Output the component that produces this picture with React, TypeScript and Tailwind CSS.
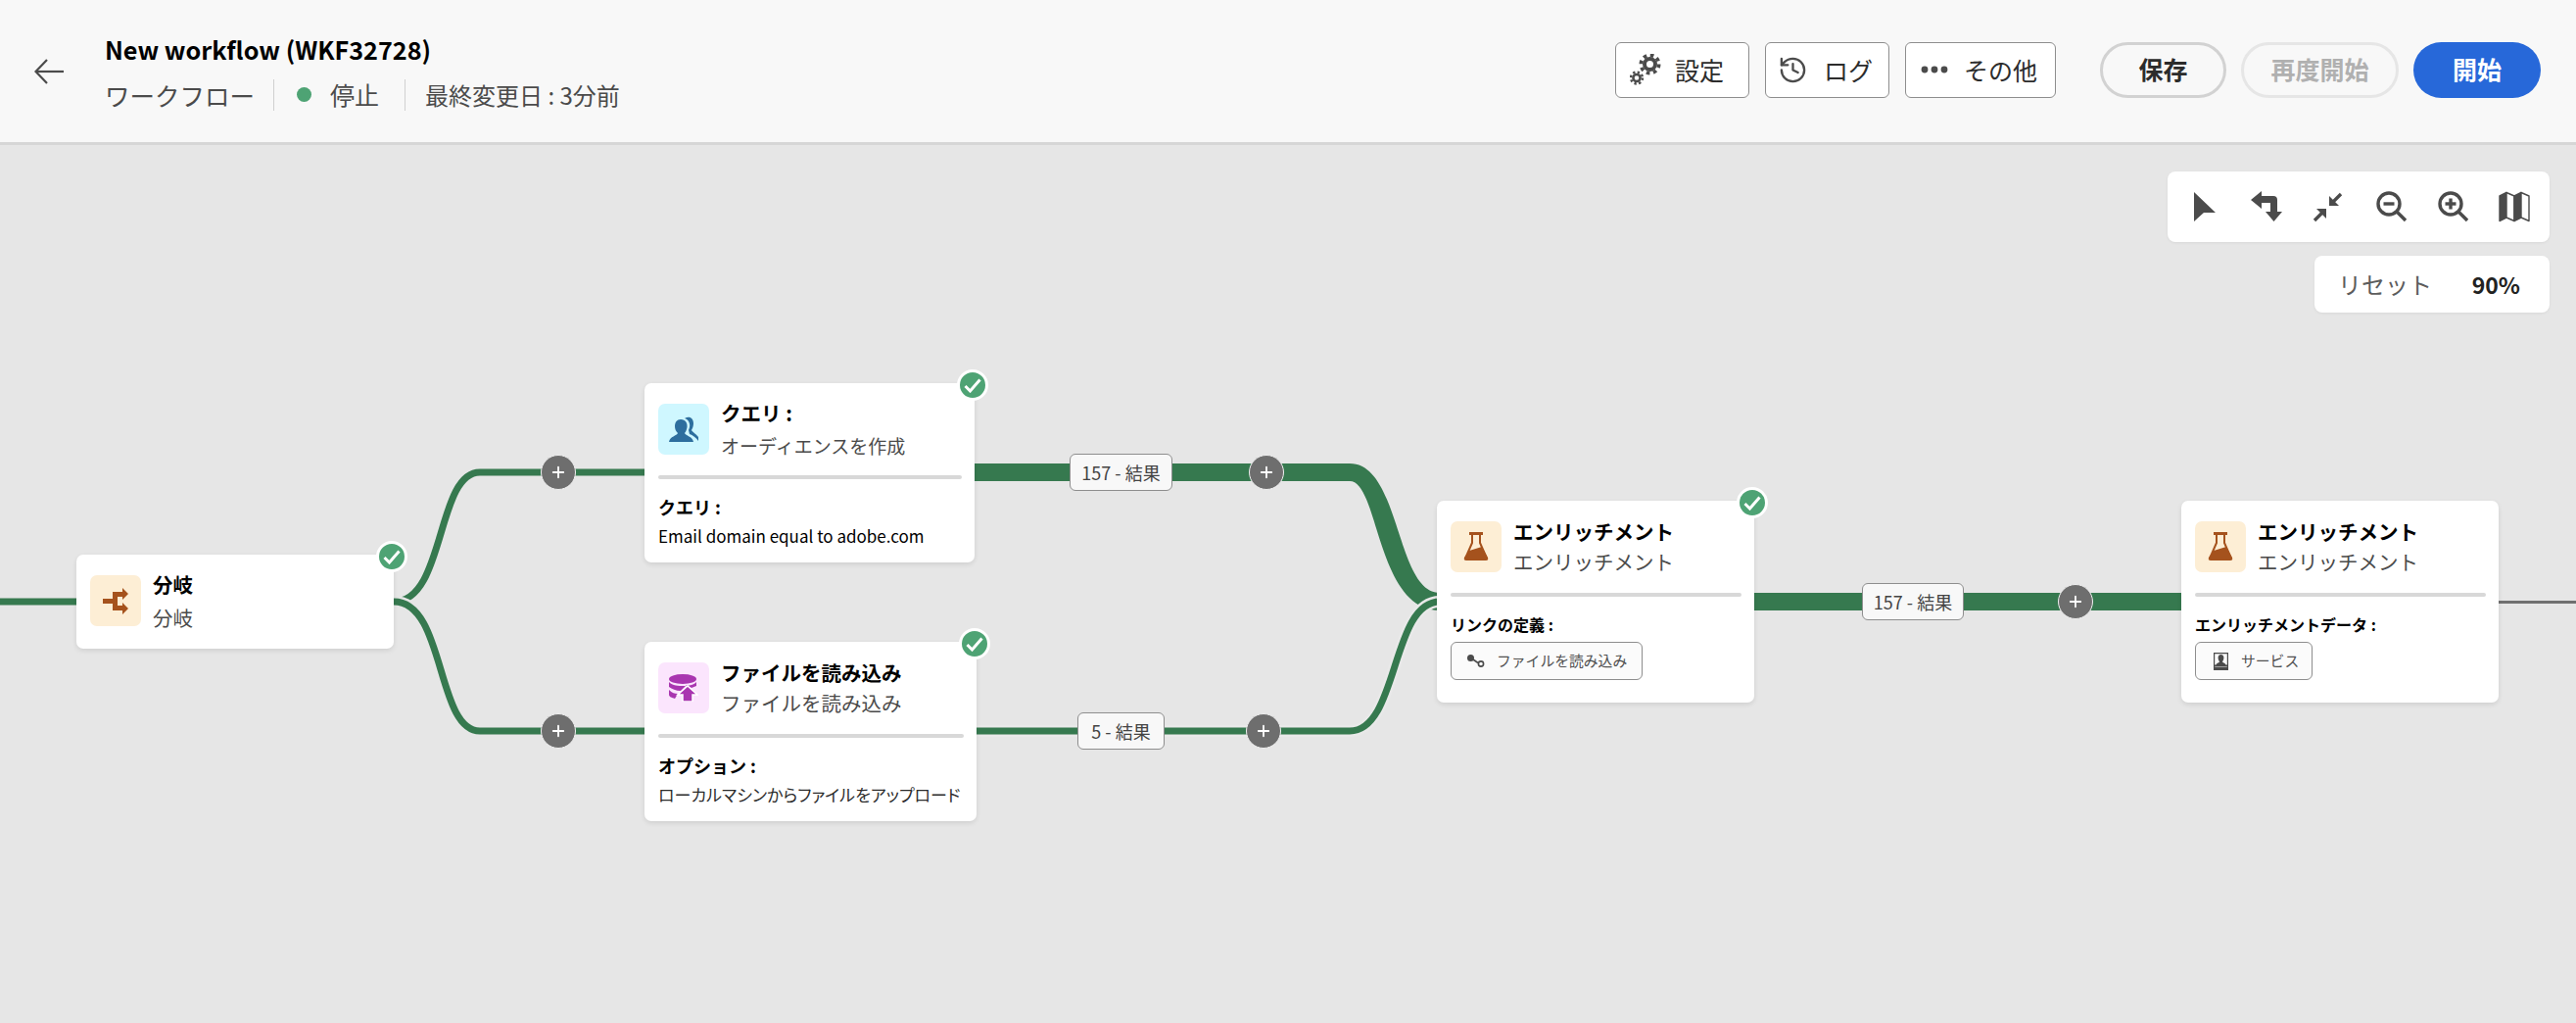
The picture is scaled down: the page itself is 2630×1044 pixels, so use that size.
import { ReactNode } from "react";
import { History, Plus } from "lucide-react";

const FONT = "font-['Noto_Sans_CJK_JP','Noto_Sans',sans-serif]";

function Gear({ cx, cy, r }: { cx: number; cy: number; r: number }) {
  const ring = r * 1.06;
  const teeth = 2 * Math.PI * ring / 16;
  return (
    <g fill="none" stroke="#4b4b4b">
      <circle cx={cx} cy={cy} r={ring} strokeWidth={r * 0.44} strokeDasharray={`${teeth} ${teeth}`} />
      <circle cx={cx} cy={cy} r={r * 0.64} strokeWidth={r * 0.46} />
    </g>
  );
}

function GearsIcon() {
  return (
    <svg width="32" height="32" viewBox="0 0 32 32">
      <Gear cx={20.5} cy={10.5} r={8.6} />
      <Gear cx={7} cy={24.5} r={5.6} />
    </svg>
  );
}

function BackArrow() {
  return (
    <svg width="30" height="26" viewBox="0 0 30 26" fill="none" stroke="#4b4b4b" strokeWidth="2.2">
      <path d="M30 13H2" />
      <path d="M13 1L1.5 13L13 25" />
    </svg>
  );
}

function ToolIcon({ children }: { children: ReactNode }) {
  return (
    <svg width="32" height="32" viewBox="0 0 32 32" fill="#4b4b4b" stroke="none">
      {children}
    </svg>
  );
}

function ZoomGlass({ plus }: { plus?: boolean }) {
  return (
    <ToolIcon>
      <g fill="none" stroke="#4b4b4b" strokeWidth="3.4">
        <circle cx="14" cy="13" r="11" />
        <path d="M22 21L31 30" />
        <path d="M8.5 13H19.5" />
        {plus && <path d="M14 7.5V18.5" />}
      </g>
    </ToolIcon>
  );
}

function Toolbar() {
  return (
    <div className="absolute right-[27px] top-[27px] flex flex-col items-end gap-[14px]">
      <div className="flex h-[72px] w-[390px] items-center justify-between rounded-[8px] bg-white pl-[22px] pr-[20px] shadow-[0_1px_3px_rgba(0,0,0,0.06)]">
        <ToolIcon><polygon points="5,1 27,22 15,22 5,31" /></ToolIcon>
        <ToolIcon><path d="M0 9L11 0V5H23A4 4 0 0 1 27 9V21H32L23.5 31L15 21H20V12H11V18Z" /></ToolIcon>
        <ToolIcon>
          <path d="M29 3L20 12" stroke="#4b4b4b" strokeWidth="3.4" />
          <polygon points="17,5 17,15 27,15" />
          <path d="M2 30L11 21" stroke="#4b4b4b" strokeWidth="3.4" />
          <polygon points="14,28 14,18 4,18" />
        </ToolIcon>
        <ZoomGlass />
        <ZoomGlass plus />
        <ToolIcon>
          <g stroke="#4b4b4b" strokeWidth="1.4" strokeLinejoin="round">
            <polygon points="1,5 8,1.5 8,27 1,30.5" />
            <polygon points="8,1.5 16,5 16,30.5 8,27" fill="#ffffff" />
            <polygon points="16,5 23,1.5 23,27 16,30.5" />
            <polygon points="23,1.5 31,5 31,30.5 23,27" fill="#ffffff" />
          </g>
        </ToolIcon>
      </div>
      <div className="flex h-[58px] w-[240px] items-center justify-between rounded-[8px] bg-white pl-[24px] pr-[30px] shadow-[0_1px_3px_rgba(0,0,0,0.06)]">
        <span className="text-[24px] text-[#5c5c5c]">リセット</span>
        <span className="text-[23px] font-bold text-[#222222]">90%</span>
      </div>
    </div>
  );
}

function OutlineButton({ icon, label, className }: { icon: ReactNode; label: string; className: string }) {
  return (
    <div className={`flex h-[57px] items-center rounded-[6px] border border-[#8e8e8e] bg-white text-[25px] leading-none text-[#2c2c2c] ${className}`}>
      {icon}
      <span>{label}</span>
    </div>
  );
}

function Header() {
  return (
    <div className="flex h-[148px] shrink-0 items-center border-b-[3px] border-[#d6d6d6] bg-[#f8f8f8]">
      <div className="ml-[35px] w-[72px]"><BackArrow /></div>
      <div className="flex flex-col">
        <div className="text-[25.2px] font-bold leading-[34px] text-black">New workflow (WKF32728)</div>
        <div className="mt-[14px] flex h-[32px] items-center text-[#4b4b4b]">
          <span className="text-[25.5px] leading-none">ワークフロー</span>
          <div className="ml-[19px] h-[32px] w-px bg-[#d0d0d0]" />
          <div className="ml-[23px] h-[15px] w-[15px] rounded-full bg-[#4ea374]" />
          <span className="ml-[19px] text-[25px] leading-none">停止</span>
          <div className="ml-[26px] h-[32px] w-px bg-[#d0d0d0]" />
          <span className="ml-[20px] text-[24px] leading-none">最終変更日 : 3分前</span>
        </div>
      </div>
      <div className="ml-auto -mt-[3px] flex items-center">
        <OutlineButton className="w-[137px] gap-[14px] pl-[14px]" icon={<GearsIcon />} label="設定" />
        <OutlineButton className="ml-[16px] w-[127px] gap-[16px] pl-[12px]" icon={<History size={31} color="#4b4b4b" strokeWidth={1.8} />} label="ログ" />
        <OutlineButton
          className="ml-[16px] w-[154px] gap-[16px] pl-[15px]"
          icon={
            <svg width="28" height="8" viewBox="0 0 28 8" fill="#4b4b4b">
              <circle cx="4" cy="4" r="3.4" />
              <circle cx="14" cy="4" r="3.4" />
              <circle cx="24" cy="4" r="3.4" />
            </svg>
          }
          label="その他"
        />
        <div className="ml-[45px] flex h-[57px] w-[129px] items-center justify-center rounded-full border-[3px] border-[#d2d2d2] text-[25px] font-bold text-[#2c2c2c]">保存</div>
        <div className="ml-[15px] flex h-[57px] w-[161px] items-center justify-center rounded-full border-[3px] border-[#e6e6e6] text-[25px] font-bold text-[#b0b0b0]">再度開始</div>
        <div className="ml-[15px] mr-[36px] flex h-[57px] w-[130px] items-center justify-center rounded-full bg-[#2768d9] text-[25px] font-bold text-white">開始</div>
      </div>
    </div>
  );
}

function Wires() {
  return (
    <svg className="absolute inset-0 h-full w-full" viewBox="0 148 2630 896" fill="none">
      <g stroke="#36794f">
        <path d="M0 614H78" strokeWidth="7" />
        <path d="M402 614C455 614 445 482 490 482H660" strokeWidth="7" />
        <path d="M402 614C455 614 445 746 490 746H660" strokeWidth="12" stroke="#e6e6e6" />
        <path d="M402 614C455 614 445 746 490 746H660" strokeWidth="7" />
        <path d="M990 482H1378" strokeWidth="18" />
        <path d="M1378 473C1430 473 1425 605 1470 605V623C1405 623 1408 491 1378 491Z" fill="#36794f" stroke="none" />
        <path d="M990 746H1378C1428 746 1420 614 1470 614" strokeWidth="12" stroke="#e9e9e9" />
        <path d="M990 746H1378C1428 746 1420 614 1470 614" strokeWidth="7" />
        <path d="M1785 614H2230" strokeWidth="18" />
      </g>
      <path d="M2545 614.5H2630" stroke="#707070" strokeWidth="3" />
    </svg>
  );
}

function PlusDot({ className }: { className: string }) {
  return (
    <div className={`absolute flex h-[36px] w-[36px] items-center justify-center rounded-full border border-[#f0f0f0] bg-[#6e6e6e] ${className}`}>
      <Plus size={18} color="#ffffff" strokeWidth={2.4} />
    </div>
  );
}

function CountTag({ label, className }: { label: string; className: string }) {
  return (
    <div className={`absolute flex h-[38px] items-center justify-center rounded-[6px] border border-[#8e8e8e] bg-[#f8f8f8] text-[18px] text-[#444444] ${className}`}>
      {label}
    </div>
  );
}

function Check() {
  return (
    <div className="absolute -right-[14px] -top-[14px] flex h-[32px] w-[32px] items-center justify-center rounded-full border-[3px] border-white bg-[#4ea374]">
      <svg width="18" height="15" viewBox="0 0 18 15" fill="none" stroke="#ffffff" strokeWidth="3">
        <path d="M1.5 8L6.5 13L16.5 1.5" />
      </svg>
    </div>
  );
}

function Chip({ icon, label, className }: { icon: ReactNode; label: string; className: string }) {
  return (
    <div className={`mt-[6px] flex h-[39px] items-center rounded-[6px] border border-[#8e8e8e] bg-[#fbfbfb] text-[14.8px] text-[#505050] ${className}`}>
      {icon}
      <span>{label}</span>
    </div>
  );
}

interface NodeProps {
  className: string;
  icon: ReactNode;
  iconBg: string;
  title: string;
  sub: string;
  tall?: boolean;
  check?: boolean;
  subClass?: string;
  labelClass?: string;
  label?: string;
  children?: ReactNode;
}

function WorkflowNode({ className, icon, iconBg, title, sub, tall, check = true, subClass = "text-[20.5px]", labelClass = "text-[16px]", label, children }: NodeProps) {
  return (
    <div className={`absolute rounded-[7px] bg-white pl-[14px] pr-[13px] pt-[21px] shadow-[0_2px_5px_rgba(0,0,0,0.1)] ${className}`}>
      <div className="flex">
        <div className={`flex h-[52px] w-[52px] shrink-0 items-center justify-center rounded-[7px] ${iconBg}`}>{icon}</div>
        <div className={`ml-[12px] flex h-[52px] flex-col justify-center whitespace-nowrap ${tall ? "leading-[34px]" : "leading-[31px]"}`}>
          <div className="text-[20.5px] font-bold text-black">{title}</div>
          <div className={`text-[#4b4b4b] ${subClass}`}>{sub}</div>
        </div>
      </div>
      {label && (
        <>
          <div className="mt-[21px] h-[4px] rounded-full bg-[#d8d8d8]" />
          <div className={`mt-[16px] font-bold leading-[24px] text-black ${labelClass}`}>{label}</div>
          {children}
        </>
      )}
      {check && <Check />}
    </div>
  );
}

function BranchIcon() {
  return (
    <svg width="26" height="27" viewBox="0 0 26 27" fill="#a5521d">
      <path d="M0 11H10V4H20V0L26 6L20 12V9H15V18H20V15L26 21L20 27V23H10V16H0Z" />
    </svg>
  );
}

function QueryIcon() {
  return (
    <svg width="30" height="27" viewBox="0 0 30 27" fill="#2d6e9e">
      <path d="M16 2C21 -1 25 2 25 7C25 10 24 12 23 14C24 16 28 18 30 21V25C28 22 24 19 21 18L20 14C22 10 22 4 16 2Z" />
      <path d="M12 3C17 3 19 7 18.5 11C18 14 17 16 16 17C17 20 24 20 25 26H0C1 20 8 20 9 17C7 15 6 13 6 10C6 6 8 3 12 3Z" />
    </svg>
  );
}

function ImportIcon() {
  return (
    <svg width="30" height="28" viewBox="0 0 30 28" fill="#a936b0">
      <ellipse cx="14" cy="5" rx="14" ry="5" />
      <path d="M0 8C3 12 11 12 14 12C17 12 25 12 28 8V12L23 14L18 11L12 17C7 17 3 15 0 13Z" />
      <path d="M0 16C3 19 6 20 9 20L6 25C3 24 0 23 0 21Z" />
      <path d="M19 12L29 21H24V28H14V21H9Z" stroke="#ffffff" strokeWidth="1.5" />
    </svg>
  );
}

function FlaskIcon() {
  return (
    <svg width="26" height="30" viewBox="0 0 26 30" fill="#a5521d">
      <rect x="6" y="0" width="14" height="3" />
      <path d="M9 3V11L2 27M17 3V11L24 27" fill="none" stroke="#a5521d" strokeWidth="2" />
      <path d="M6 19L19 15L25 26Q26 29 23 29H3Q0 29 1 26Z" />
    </svg>
  );
}

function LinkIcon() {
  return (
    <svg className="ml-[16px] mr-[12px]" width="18" height="13" viewBox="0 0 18 13">
      <circle cx="3.5" cy="3.5" r="3.5" fill="#4b4b4b" />
      <path d="M6 5L11 8.5" stroke="#4b4b4b" strokeWidth="1.6" />
      <circle cx="14" cy="9.5" r="2.6" fill="none" stroke="#4b4b4b" strokeWidth="1.6" />
    </svg>
  );
}

function ServiceIcon() {
  return (
    <svg className="ml-[18px] mr-[13px]" width="15" height="18" viewBox="0 0 15 18" fill="#4b4b4b">
      <path d="M0 0H15V18H0ZM1.2 1.2V12.5H2.5C3 10.5 6 10.5 6 9C5 8 4.6 6.5 4.6 5C4.6 3 6 2 7.5 2C9 2 10.4 3 10.4 5C10.4 6.5 10 8 9 9C9 10.5 12 10.5 12.5 12.5H13.8V1.2ZM1.2 14.5V15H13.8V14.5Z" fillRule="evenodd" />
    </svg>
  );
}

export default function App() {
  return (
    <div className={`flex h-[1044px] w-[2630px] flex-col overflow-hidden ${FONT}`}>
      <Header />
      <div className="relative flex-1 bg-[#e6e6e6]">
        <Wires />
        <PlusDot className="left-[552px] top-[316px]" />
        <PlusDot className="left-[552px] top-[580px]" />
        <PlusDot className="left-[1275px] top-[316px]" />
        <PlusDot className="left-[1272px] top-[580px]" />
        <PlusDot className="left-[2101px] top-[448px]" />
        <CountTag className="left-[1092px] top-[315px] w-[105px]" label="157 - 結果" />
        <CountTag className="left-[1100px] top-[579px] w-[89px]" label="5 - 結果" />
        <CountTag className="left-[1901px] top-[447px] w-[104px]" label="157 - 結果" />

        <WorkflowNode className="left-[78px] top-[418px] h-[96px] w-[324px]" iconBg="bg-[#fdeed5]" icon={<BranchIcon />} title="分岐" sub="分岐" tall />
        <WorkflowNode className="left-[658px] top-[243px] h-[183px] w-[337px]" iconBg="bg-[#cff7ff]" icon={<QueryIcon />} title="クエリ :" sub="オーディエンスを作成" subClass="text-[19px]" tall label="クエリ :" labelClass="text-[18px]">
          <div className="mt-[6px] whitespace-nowrap text-[17px] leading-[24px] text-black">Email domain equal to adobe.com</div>
        </WorkflowNode>
        <WorkflowNode className="left-[658px] top-[507px] h-[183px] w-[339px]" iconBg="bg-[#fbe5fd]" icon={<ImportIcon />} title="ファイルを読み込み" sub="ファイルを読み込み" label="オプション :" labelClass="text-[18px]">
          <div className="mt-[6px] whitespace-nowrap text-[17px] leading-[24px] text-[#2c2c2c] [font-feature-settings:'palt']">ローカルマシンからファイルをアップロード</div>
        </WorkflowNode>
        <WorkflowNode className="left-[1467px] top-[363px] h-[206px] w-[324px]" iconBg="bg-[#fdeed5]" icon={<FlaskIcon />} title="エンリッチメント" sub="エンリッチメント" label="リンクの定義 :">
          <Chip className="w-[196px]" icon={<LinkIcon />} label="ファイルを読み込み" />
        </WorkflowNode>
        <WorkflowNode className="left-[2227px] top-[363px] h-[206px] w-[324px]" iconBg="bg-[#fdeed5]" icon={<FlaskIcon />} title="エンリッチメント" sub="エンリッチメント" check={false} label="エンリッチメントデータ :">
          <Chip className="w-[120px]" icon={<ServiceIcon />} label="サービス" />
        </WorkflowNode>

        <Toolbar />
      </div>
    </div>
  );
}
